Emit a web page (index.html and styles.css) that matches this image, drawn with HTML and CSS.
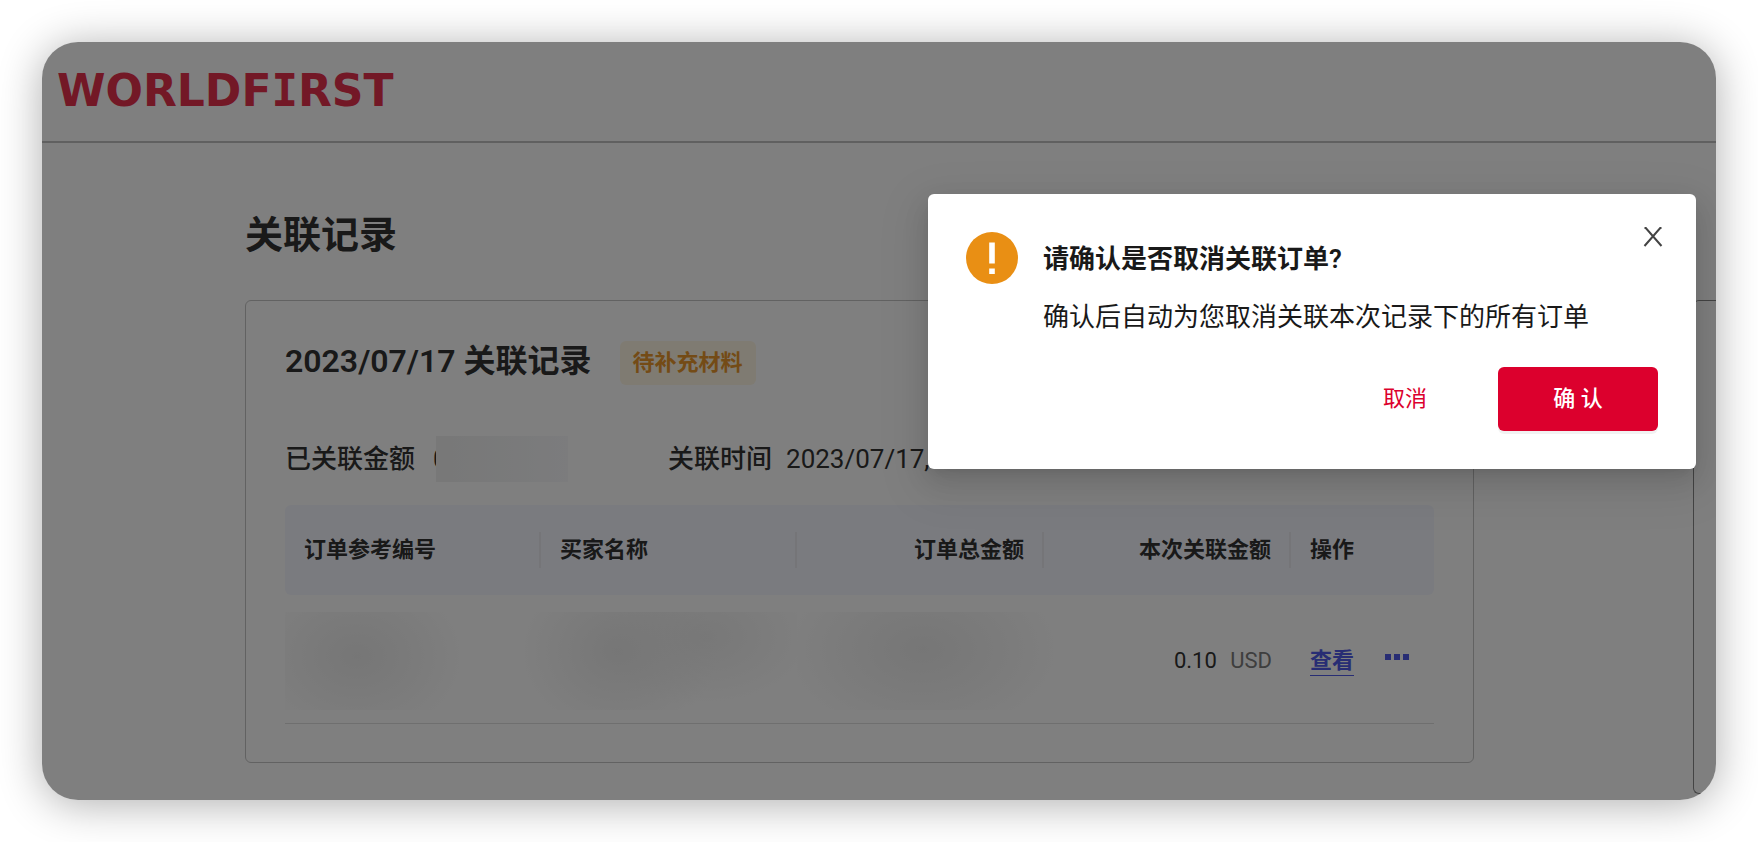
FILE: index.html
```html
<!DOCTYPE html>
<html lang="zh-CN">
<head>
<meta charset="utf-8">
<meta name="viewport" content="width=device-width, initial-scale=1">
<title>关联记录</title>
<link rel="stylesheet" href="styles.css">
</head>
<body>
<div class="window">
  <header class="topbar">
    <a class="logo" href="#">WORLDF<span class="logo-slab">I</span>RST</a>
  </header>
  <main class="page">
    <h1 class="page-title">关联记录</h1>
    <div class="columns">
      <section class="card">
        <div class="card-head">
          <h2 class="card-title">2023/07/17 关联记录</h2>
          <span class="tag">待补充材料</span>
        </div>
        <dl class="facts">
          <div class="fact fact-amount">
            <dt>已关联金额</dt>
            <dd class="amount">0<span class="mask"></span></dd>
          </div>
          <div class="fact">
            <dt>关联时间</dt>
            <dd>2023/07/17,</dd>
          </div>
        </dl>
        <table class="orders">
          <colgroup>
            <col class="col-ref"><col class="col-buyer"><col class="col-total"><col class="col-linked"><col class="col-action">
          </colgroup>
          <thead>
            <tr>
              <th scope="col"><span class="th-label">订单参考编号</span></th>
              <th scope="col"><span class="th-label">买家名称</span></th>
              <th scope="col" class="num"><span class="th-label">订单总金额</span></th>
              <th scope="col" class="num"><span class="th-label">本次关联金额</span></th>
              <th scope="col"><span class="th-label">操作</span></th>
            </tr>
          </thead>
          <tbody>
            <tr>
              <td class="hidden-cell"><span class="smudge smudge-ref"></span></td>
              <td class="hidden-cell"><span class="smudge smudge-buyer"></span></td>
              <td class="hidden-cell"><span class="smudge smudge-total"></span></td>
              <td class="num">0.10 <span class="currency">USD</span></td>
              <td>
                <div class="actions">
                  <a class="view" href="#">查看</a>
                  <button class="more" type="button" aria-label="更多">
                    <svg width="24" height="6" viewBox="0 0 24 6"><path d="M0 0h6v6H0zM9 0h6v6H9zM18 0h6v6h-6z" fill="currentColor"/></svg>
                  </button>
                </div>
              </td>
            </tr>
          </tbody>
        </table>
      </section>
      <aside class="side-card"></aside>
    </div>
  </main>
  <div class="overlay"></div>
  <div class="dialog" role="alertdialog" aria-labelledby="dialog-title" aria-describedby="dialog-text">
    <button class="close" type="button" aria-label="关闭">
      <svg width="20" height="20" viewBox="0 0 20 20"><path d="M1.500 1h1.300L18.500 19M18.500 1h-1.300L1.500 19" fill="none" stroke="#444" stroke-width="2"/></svg>
    </button>
    <div class="dialog-body">
      <svg class="warn" width="52" height="52" viewBox="0 0 52 52"><circle cx="26" cy="26" r="26" fill="#e98f14"/><path d="M23.200 10.500h5.600v21h-5.600zM23.200 36.500h5.600v5.500h-5.600z" fill="#fff"/></svg>
      <div class="dialog-copy">
        <h2 class="dialog-title" id="dialog-title">请确认是否取消关联订单?</h2>
        <p class="dialog-text" id="dialog-text">确认后自动为您取消关联本次记录下的所有订单</p>
      </div>
    </div>
    <div class="dialog-foot">
      <button class="btn btn-text" type="button">取消</button>
      <button class="btn btn-primary" type="button">确 认</button>
    </div>
  </div>
</div>
</body>
</html>
```
FILE: styles.css
```css
* { box-sizing: border-box; }

body {
  margin: 0;
  padding: 42px;
  min-height: 100vh;
  display: flex;
  background: #fff;
  color: #333;
  font-family: Roboto, "Noto Sans CJK SC", sans-serif;
  font-size: 22px;
  line-height: 32px;
}

h1, h2, p, dl, dd { margin: 0; }

button {
  padding: 0;
  border: 0;
  background: none;
  font: inherit;
  cursor: pointer;
}

svg { display: block; }

.window {
  position: relative;
  flex: 1;
  min-width: 0;
  display: flex;
  flex-direction: column;
  overflow: hidden;
  border-radius: 36px;
  background: #fff;
  box-shadow: 0 4px 44px rgba(0, 0, 0, .32);
}

.topbar {
  display: flex;
  align-items: center;
  padding: 19px 15px 20px;
  border-bottom: 2px solid #c0c0c0;
}

.logo {
  color: #e6304c;
  font: bold 44px/60px "DejaVu Sans", sans-serif;
  text-decoration: none;
}

.logo-slab { font-family: "DejaVu Sans Mono", monospace; }

.page {
  flex: 1;
  display: flex;
  flex-direction: column;
  padding: 64px 0 6px 203px;
}

.page-title {
  margin-bottom: 37px;
  font-size: 38px;
  line-height: 56px;
  font-weight: 700;
}

.columns {
  flex: 1;
  display: grid;
  grid-template-columns: 1fr 23px;
  gap: 219px;
  align-items: start;
}

.card {
  padding: 40px 39px 38px;
  border: 1px solid #c4c4c4;
  border-radius: 6px;
}

.side-card {
  align-self: stretch;
  border: 1px solid #888;
  border-right: 0;
  border-radius: 6px 0 0 6px;
}

.card-head {
  display: flex;
  align-items: flex-start;
  gap: 28px;
}

.card-title {
  font-size: 32px;
  line-height: 40px;
  font-weight: 600;
}

.tag {
  padding: 6px 13px;
  border-radius: 6px;
  background: #fff7e4;
  color: #e8962c;
  font-weight: 600;
}

.facts {
  display: flex;
  padding: 51px 0 23px;
  font-size: 26px;
  line-height: 46px;
}

.fact {
  display: flex;
  gap: 14px;
}

.fact-amount { width: 383px; }

.fact dt { font-weight: 500; }

.amount {
  display: flex;
  padding-left: 4px;
}

.mask {
  width: 132px;
  margin-left: -12px;
  background: linear-gradient(90deg, #f0f0f0, #f4f5f6 60%, #f8f8fb);
}

.orders {
  width: 100%;
  table-layout: fixed;
  border-collapse: separate;
  border-spacing: 0;
}

.col-ref, .col-buyer { width: 256px; }
.col-total, .col-linked { width: 247px; }

.orders th {
  padding: 27px 0;
  background: #f5f7ff;
  font-weight: 600;
  text-align: left;
}

.orders th:first-child { border-radius: 6px 0 0 6px; }
.orders th:last-child { border-radius: 0 6px 6px 0; }

.th-label {
  display: block;
  padding: 0 18px 0 19px;
  line-height: 36px;
  border-right: 2px solid #eaebf0;
}

.orders th:last-child .th-label { border-right: 0; }

.orders td {
  padding: 17px 19px 13px;
  border-bottom: 1px solid #dedede;
}

.orders .num { text-align: right; }

.orders .hidden-cell { padding: 17px 0 13px; }

.smudge {
  display: block;
  height: 98px;
}

.smudge-ref { background: radial-gradient(ellipse 110px 85px at 28% 45%, #ededed, rgba(240, 240, 240, .5) 60%, transparent); }

.smudge-buyer {
  margin-left: -16px;
  background: radial-gradient(ellipse 100px 85px at 34% 40%, #ededed, transparent), radial-gradient(ellipse 110px 70px at 66% 25%, #f0f0f0, transparent);
}

.smudge-total {
  margin-right: -38px;
  background: radial-gradient(ellipse 140px 90px at 44% 38%, #ededed, rgba(240, 240, 240, .5) 60%, transparent);
}

.currency {
  margin-left: 8px;
  color: #7c7c7c;
}

.actions {
  display: flex;
  align-items: center;
  gap: 31px;
}

.view {
  border-bottom: 1px solid #505ae8;
  color: #505ae8;
  font-weight: 600;
  line-height: 28px;
  text-decoration: none;
}

.more {
  padding-bottom: 8px;
  color: #505ae8;
}

.overlay {
  position: absolute;
  inset: 0;
  background: rgba(0, 0, 0, .5);
}

.dialog {
  position: absolute;
  top: 152px;
  right: 20px;
  width: 768px;
  max-width: calc(100% - 40px);
  padding: 38px;
  border-radius: 6px;
  background: #fff;
  color: #191919;
  box-shadow: 0 5px 10px -6px rgba(0, 0, 0, .12), 0 10px 26px rgba(0, 0, 0, .1), 0 14px 44px 13px rgba(0, 0, 0, .07);
}

.dialog-body {
  display: flex;
  gap: 25px;
}

.dialog-copy {
  flex: 1;
  padding: 7px 0 30px;
  font-size: 26px;
  line-height: 40px;
}

.dialog-title {
  margin-bottom: 18px;
  font-size: 26px;
  line-height: 40px;
  font-weight: 600;
}

.dialog-text { white-space: nowrap; }

.close {
  position: absolute;
  top: 33px;
  right: 33px;
}

.dialog-foot {
  display: flex;
  justify-content: flex-end;
  gap: 24px;
}

.btn {
  height: 64px;
  border-radius: 6px;
}

.btn-text {
  padding: 0 47px;
  color: #dc002d;
}

.btn-primary {
  width: 160px;
  background: #dc002d;
  color: #fff;
  font-weight: 500;
  box-shadow: 0 3px 0 rgba(0, 0, 0, .05);
}
```
